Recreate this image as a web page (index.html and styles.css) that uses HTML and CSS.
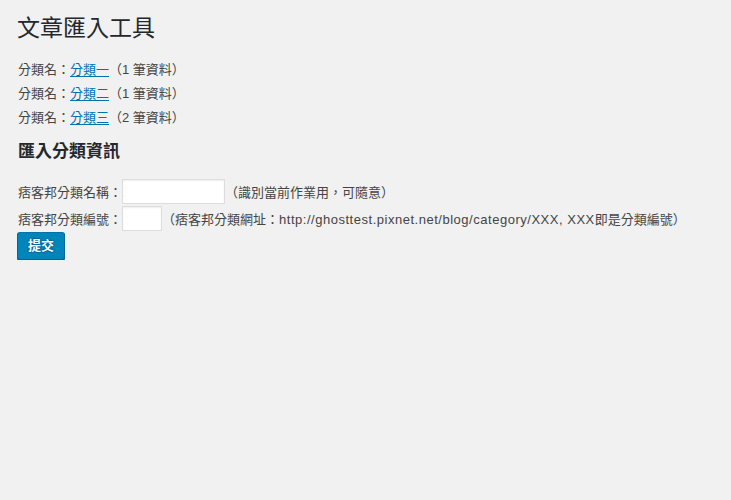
FILE: index.html
```html
<!DOCTYPE html>
<html lang="zh-Hant">
<head>
<meta charset="utf-8">
<title>文章匯入工具</title>
<link rel="stylesheet" href="styles.css">
</head>
<body>
<div class="wrap">
  <h1 class="title">文章匯入工具</h1>
  <div class="cats">
    <div class="cat">分類名：<a href="#">分類一</a>（1 筆資料）</div>
    <div class="cat">分類名：<a href="#">分類二</a>（1 筆資料）</div>
    <div class="cat">分類名：<a href="#">分類三</a>（2 筆資料）</div>
  </div>
  <h2 class="subtitle">匯入分類資訊</h2>
  <form class="form">
    <div class="row">
      <label class="label">痞客邦分類名稱：</label>
      <input class="input input-name" type="text">
      <span class="hint">（識別當前作業用，可隨意）</span>
    </div>
    <div class="row">
      <label class="label">痞客邦分類編號：</label>
      <input class="input input-num" type="text">
      <span class="hint">（痞客邦分類網址：<span class="latin">http://ghosttest.pixnet.net/blog/category/XXX, XXX</span>即是分類編號）</span>
    </div>
    <button class="button" type="button">提交</button>
  </form>
</div>
</body>
</html>
```
FILE: styles.css
```css
html, body {
  margin: 0;
  padding: 0;
  background: #f1f1f1;
}
body {
  font-family: "Liberation Sans", "Noto Sans CJK TC", sans-serif;
  font-size: 13px;
  color: #444;
}
.wrap {
  padding: 14px 0 0 18px;
}
.title {
  margin: 0 0 15px -1px;
  font-size: 23px;
  line-height: 29px;
  font-weight: 400;
  color: #23282d;
}
.cat {
  line-height: 24px;
}
.cat a {
  color: #0073aa;
  text-decoration: underline;
  text-underline-offset: 2px;
}
.subtitle {
  margin: 10px 0 15px;
  font-size: 17px;
  line-height: 24px;
  font-weight: 700;
  color: #23282d;
}
.form {
  margin: 0;
}
.row {
  display: flex;
  align-items: center;
  height: 25px;
  margin-bottom: 2px;
  white-space: nowrap;
}
.label {
  display: block;
}
.input {
  box-sizing: border-box;
  height: 25px;
  margin: 0;
  padding: 3px 5px;
  border: 1px solid #ddd;
  background: #fff;
  box-shadow: inset 0 1px 2px rgba(0,0,0,.07);
  font: inherit;
  color: #32373c;
  outline: none;
}
.input-name {
  width: 103px;
}
.input-num {
  width: 40px;
}
.hint {
  margin-left: 0;
}
.latin {
  letter-spacing: 0.52px;
}
.button {
  display: block;
  box-sizing: border-box;
  height: 28px;
  margin: -1px 0 0 -1px;
  padding: 0 10px;
  border: 1px solid;
  border-color: #0073aa #006799 #006799;
  border-radius: 3px;
  background: #0085ba;
  box-shadow: 0 1px 0 #006799;
  color: #fff;
  font-family: inherit;
  font-size: 13px;
  font-weight: 700;
  line-height: 26px;
  text-shadow: 0 -1px 1px #006799, 1px 0 1px #006799, 0 1px 1px #006799, -1px 0 1px #006799;
  cursor: pointer;
}
```
